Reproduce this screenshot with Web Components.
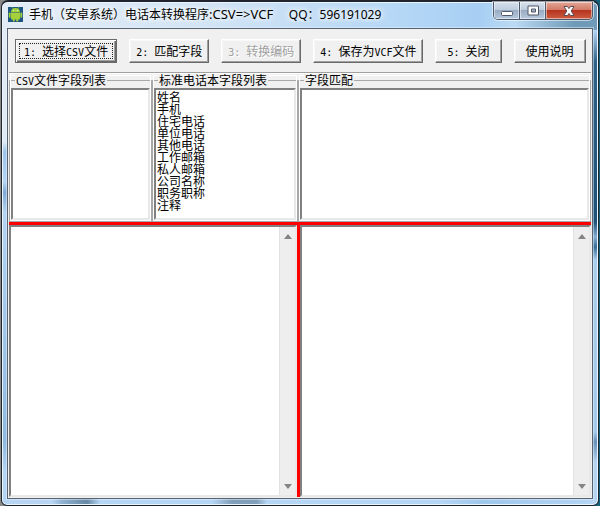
<!DOCTYPE html>
<html lang="zh-CN">
<head>
<meta charset="utf-8">
<title>手机（安卓系统）电话本转换程序</title>
<style>
body { margin: 0; background: linear-gradient(90deg, #888, #444 50%, #12607a); font: 12px/12px "Noto Sans CJK SC", sans-serif; color: #000; }
app-window { min-height: 100vh; }
.l { font: 10px/8px "DejaVu Sans Mono", monospace; white-space: pre; }
.t { font: 12px/12px "Noto Sans", sans-serif; white-space: pre; }
.w { font-size: 13px; }
</style>
</head>
<body>
<app-window>
  <title-bar slot="title">手机（安卓系统）电话本转换程序<span class="t w">:CSV=&gt;VCF</span><span class="t">     QQ</span>：<span class="t">596191029</span></title-bar>
  <tool-bar slot="tools">
    <tool-button default><span class="l">1: </span>选择<span class="l">CSV</span>文件</tool-button>
    <tool-button><span class="l">2: </span>匹配字段</tool-button>
    <tool-button disabled><span class="l">3: </span>转换编码</tool-button>
    <tool-button><span class="l">4: </span>保存为<span class="l">VCF</span>文件</tool-button>
    <tool-button><span class="l">5: </span>关闭</tool-button>
    <tool-button>使用说明</tool-button>
  </tool-bar>
  <field-panels>
    <group-list label="CSV文件字段列表"><span class="l">CSV</span>文件字段列表</group-list>
    <group-list label="标准电话本字段列表" items="姓名,手机,住宅电话,单位电话,其他电话,工作邮箱,私人邮箱,公司名称,职务职称,注释">标准电话本字段列表</group-list>
    <group-list label="字段匹配">字段匹配</group-list>
  </field-panels>
  <split-view>
    <memo-box slot="left" label="CSV文件内容"></memo-box>
    <memo-box slot="right" label="VCF文件内容"></memo-box>
  </split-view>
</app-window>

<script>
const define = (name, html, setup) => {
  const template = document.createElement('template');
  template.innerHTML = '<style>*{box-sizing:border-box}:host{box-sizing:border-box}</style>' + html;
  customElements.define(name, class extends HTMLElement {
    constructor() {
      super();
      this.attachShadow({ mode: 'open' }).append(template.content.cloneNode(true));
    }
    connectedCallback() { if (setup) setup(this, this.shadowRoot); }
  });
};

define('caption-buttons', `
<style>
  :host { display: flex; border: 1px solid #4b596a; border-top: 0; border-radius: 0 0 5px 5px; overflow: hidden; box-shadow: 0 0 0 1px #ffffff90; }
  button { display: grid; place-items: center; width: 26px; height: 17px; padding: 0; border: 0; border-right: 1px solid #4b596a;
    background: linear-gradient(#d6e0ec, #bccbdc 48%, #98abc2 50%, #b6c9de); box-shadow: inset 0 0 0 1px #ffffff80; }
  .close { width: 46px; border-right: 0; background: linear-gradient(#e5a595, #d27a68 46%, #b63420 50%, #cd5d40); }
  svg { display: block; }
</style>
<button aria-label="最小化"><svg width="14" height="14"><rect x="1.5" y="7.500" width="11" height="4" rx="1" fill="#fff" stroke="#535666"/></svg></button>
<button aria-label="最大化"><svg width="14" height="14"><path d="M2 2h10.500v9h-10.500zM5.500 5v3h4v-3z" fill="#fff" fill-rule="evenodd" stroke="#535666"/></svg></button>
<button class="close" aria-label="关闭窗口"><svg width="14" height="14"><path d="M2 2.5h3.5L7 4.6l1.500-2.100H12L9.200 7l2.800 4.500H8.500L7 9.400l-1.500 2.100H2L4.800 7z" fill="#fff" stroke="#5b4b58"/></svg></button>`);

define('title-bar', `
<style>
  :host { display: flex; align-items: flex-start; height: 27px; }
  .icon { flex: none; margin: 5px 6px 0 1px; }
  .text { flex: 1; min-width: 0; margin-top: 4px; font-size: 12px; line-height: 16px; white-space: nowrap; overflow: hidden;
    text-shadow: 0 0 5px #fff, 0 0 8px #fff, 0 0 8px #ffffffa0; }
</style>
<svg class="icon" width="15" height="15" viewBox="0 0 15 15">
  <rect width="15" height="15" fill="#1d5682"/>
  <g fill="#a4d03c"><path d="M3 5a4.500 4 0 0 1 9 0z"/><path d="M3 5.400h9v6q0 1-1 1H4q-1 0-1-1z"/>
  <rect x=".8" y="5.400" width="1.800" height="5.400" rx=".8"/><rect x="12.400" y="5.400" width="1.800" height="5.400" rx=".8"/>
  <rect x="4.800" y="11" width="2" height="3.600" rx=".8"/><rect x="8.200" y="11" width="2" height="3.600" rx=".8"/></g>
  <path d="M4.300 .4l1 1.600M10.700 .4l-1 1.600" stroke="#a4d03c" stroke-width=".8"/>
  <circle cx="5.600" cy="3.400" r=".5" fill="#fff"/><circle cx="9.400" cy="3.400" r=".5" fill="#fff"/>
</svg>
<div class="text"><slot></slot></div>
<caption-buttons></caption-buttons>`);

define('app-window', `
<style>
  :host { display: flex; padding: 0 1px; }
  .frame { flex: 1; display: flex; flex-direction: column; min-width: 0; padding: 0 5px 6px; border: 1px solid #20242e; border-top: 2px solid #20242e; border-radius: 7px 7px 6px 6px;
    box-shadow: inset 0 0 0 1px #eaf5ff;
    background:
      linear-gradient(180deg, #6f9fbe00 0 28px, #2c6188 60px, #1c5178 220px, #84aed2 235px, #356c96 245px, #a9cdec 258px, #a4c9ea 430px, #6790b8 440px, #b4d4f2 460px) right / 7px 100% no-repeat,
      linear-gradient(180deg, #e2ebf5 0, #dfe9f4 140px, #9bc3ea 150px, #b5d5f3 180px, #7ea9d6 190px, #b3d3f1 210px, #8fb9e0 440px, #b4d5f3 470px) left / 7px 100% no-repeat,
      linear-gradient(90deg, #e4edf7 0, #d3e4f5 200px, #b5d7f6 400px, #a7cff3 80%, #bbdaf3 86%, #6f9bb8 96%) top / 100% 28px no-repeat,
      linear-gradient(90deg, #b8d6f3 0 50px, #8fb2d2 60px, #6889a5 85px, #b5d6f5 98px 210px, #809fb9 230px 255px, #b5d6f5 265px 440px, #9fc7ec 480px, #b5d6f5); }
  .client { flex: 1; display: flex; flex-direction: column; margin-top: -1px; border: 1px solid #59636f; outline: 1px solid #e8f4ff80; background: #f0f0f0; padding: 0 1px 1px; }
</style>
<div class="frame"><slot name="title"></slot><div class="client"><slot name="tools"></slot><slot></slot></div></div>`);

define('tool-bar', `
<style>
  :host { display: flex; gap: 12px; padding: 10px 4px 9px 6px; border-bottom: 1px solid #a0a0a0; box-shadow: 0 1px #fff; }
</style><slot></slot>`);

define('tool-button', `
<style>
  :host { display: flex; }
  button { height: 24px; padding: 0 6px; border: 1px solid; border-color: #fff #696969 #696969 #fff; box-shadow: inset -1px -1px #a0a0a0, inset 1px 1px #f8f8f8;
    background: #f0f0f0; color: #000; font: inherit; white-space: nowrap; }
  :host(:last-child) button { padding: 0 11px; }
  :host(:nth-child(5)) button { padding: 0 11px; }
  :host([default]) button { padding: 0 8px; border-color: #696969; box-shadow: inset 1px 1px #fff, inset -1px -1px #696969, inset -2px -2px #a0a0a0; outline: 1px dotted #222; outline-offset: -5px; }
  button:disabled { color: #a0a0a0; text-shadow: 1px 1px #fff; }
</style><button><slot></slot></button>`, (host, root) => {
  root.querySelector('button').disabled = host.hasAttribute('disabled');
});

define('field-panels', `
<style>
  :host { display: grid; grid-template-columns: 143fr 146fr 293fr; padding-top: 1px; }
</style><slot></slot>`);

define('group-list', `
<style>
  :host { display: block; min-width: 0; }
  fieldset { min-width: 0; margin: 0; padding: 2px 1px 1px; border: 1px solid #a8a8a8; outline: 1px solid #fff; outline-offset: -2px; }
  legend { margin-left: 4px; padding: 0 1px; line-height: 12px; white-space: nowrap; background: #f0f0f0; position: relative; }
  select { display: block; width: 100%; height: 132px; margin: 0; padding: 0; border: 2px solid; border-color: #808080 #e8e8e8 #e8e8e8 #808080; border-radius: 0; outline: 0;
    background: #fff; color: #000; font: inherit; overflow: hidden; scrollbar-width: none; }
  option { display: flex; align-items: center; min-height: 12px; height: 12px; padding: 0 1px; }
</style>
<fieldset><legend><slot></slot></legend><select size="10"></select></fieldset>`, (host, root) => {
  const list = root.querySelector('select');
  list.setAttribute('aria-label', host.getAttribute('label'));
  list.replaceChildren(...(host.getAttribute('items') || '').split(',').filter(Boolean).map(text => new Option(text)));
});

define('split-view', `
<style>
  :host { flex: 1; display: grid; grid-template-columns: 288fr 3px 291fr; border-top: 3px solid #f00; }
  i { background: #f00; }
</style><slot name="left"></slot><i></i><slot name="right"></slot>`);

define('scroll-track', `
<style>
  :host { display: flex; flex-direction: column; justify-content: space-between; width: 16px; background: #eee; border-left: 1px solid #e2e2e2; }
  button { display: grid; place-items: center; height: 18px; padding: 0; border: 0; background: none; }
</style>
<button aria-label="向上滚动" disabled><svg width="8" height="5"><path d="M0 5 4 0l4 5z" fill="#858585"/></svg></button>
<button aria-label="向下滚动" disabled><svg width="8" height="5"><path d="M0 0h8L4 5z" fill="#858585"/></svg></button>`);

define('memo-box', `
<style>
  :host { display: flex; min-width: 0; border: 2px solid; border-color: #808080 #e8e8e8 #e8e8e8 #808080; background: #fff; }
  textarea { flex: 1; min-width: 0; margin: 0; padding: 2px; border: 0; outline: 0; resize: none; overflow: hidden; background: #fff; font: inherit; }
</style><textarea></textarea><scroll-track></scroll-track>`, (host, root) => {
  root.querySelector('textarea').setAttribute('aria-label', host.getAttribute('label'));
});
</script>
</body>
</html>
